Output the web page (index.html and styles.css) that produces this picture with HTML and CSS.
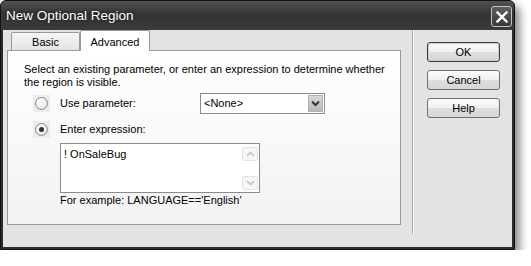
FILE: index.html
```html
<!DOCTYPE html>
<html lang="en">
<head>
    <meta charset="UTF-8">
    <title>New Optional Region</title>
    <link rel="stylesheet" href="styles.css">
</head>
<body>
    <div class="window">
        <div class="titlebar">
            <span class="title">New Optional Region</span>
            <span class="close">
                <svg width="12" height="12" viewBox="0 0 12 12"><path d="M1.5 1.5 L10.5 10.5 M10.5 1.5 L1.5 10.5" stroke="#fff" stroke-width="2.4" stroke-linecap="square"/></svg>
            </span>
        </div>
        <div class="client">
            <div class="main">
                <div class="tabs">
                    <div class="tab">Basic</div>
                    <div class="tab selected">Advanced</div>
                </div>
                <div class="panel">
                    <p class="intro">Select an existing parameter, or enter an expression to determine whether<br>the region is visible.</p>
                    <div class="row row-param">
                        <span class="radio"><span class="circle"></span></span>
                        <span class="label">Use parameter:</span>
                        <div class="select">
                            <span class="select-text">&lt;None&gt;</span>
                            <span class="select-btn">
                                <svg width="9" height="7" viewBox="0 0 9 7"><path d="M1 1.5 L4.5 5 L8 1.5" fill="none" stroke="#333" stroke-width="2"/></svg>
                            </span>
                        </div>
                    </div>
                    <div class="row row-expr">
                        <span class="radio"><span class="circle checked"></span></span>
                        <span class="label">Enter expression:</span>
                    </div>
                    <div class="textarea">
                        <span class="textarea-text">! OnSaleBug</span>
                        <div class="scrollbar">
                            <span class="sb-btn">
                                <svg width="9" height="6" viewBox="0 0 9 6"><path d="M1 5 L4.5 1.5 L8 5" fill="none" stroke="#c4c4c4" stroke-width="1.6"/></svg>
                            </span>
                            <span class="sb-btn">
                                <svg width="9" height="6" viewBox="0 0 9 6"><path d="M1 1 L4.5 4.5 L8 1" fill="none" stroke="#c4c4c4" stroke-width="1.6"/></svg>
                            </span>
                        </div>
                    </div>
                    <p class="example">For example: LANGUAGE=='English'</p>
                </div>
            </div>
            <div class="separator"></div>
            <div class="buttons">
                <button class="btn default">OK</button>
                <button class="btn">Cancel</button>
                <button class="btn">Help</button>
            </div>
        </div>
    </div>
</body>
</html>
```

FILE: styles.css
```css
body {
    margin: 0;
    background: #fff;
    font-family: "Liberation Sans", Arial, sans-serif;
    font-size: 11px;
    color: #000;
}
.window {
    box-sizing: border-box;
    width: 515px;
    height: 250px;
    background: #2c2c2c;
    border: 1px solid #111;
    border-radius: 6px 6px 0 0;
    padding: 0 2px 2px 2px;
    display: flex;
    flex-direction: column;
    box-shadow: 5px 6px 8px rgba(0, 0, 0, 0.45);
}
.titlebar {
    height: 29px;
    display: flex;
    align-items: center;
    justify-content: space-between;
    padding-left: 5px;
    padding-right: 2px;
    background: linear-gradient(#525252, #343434 45%, #3a3a3a);
    margin: 0 -2px;
    border-radius: 5px 5px 0 0;
}
.title {
    color: #fff;
    font-size: 13.5px;
    text-shadow: 0 0 3px rgba(0, 0, 0, 0.8);
}
.close {
    box-sizing: border-box;
    width: 21px;
    height: 21px;
    margin-top: 2px;
    border: 1px solid #c4c4c4;
    border-radius: 3px;
    background: linear-gradient(#5e5e5e, #3a3a3a);
    display: flex;
    align-items: center;
    justify-content: center;
}
.client {
    flex: 1;
    background: #e3e3e3;
    display: flex;
    padding-left: 4px;
}
.main {
    width: 394px;
}
.tabs {
    height: 20px;
    display: flex;
    align-items: flex-end;
    padding-left: 4px;
}
.tab {
    box-sizing: border-box;
    height: 18px;
    width: 69px;
    border: 1px solid #9a9a9a;
    border-bottom: none;
    border-radius: 2px 2px 0 0;
    background: linear-gradient(#f6f6f6, #e4e4e4);
    text-align: center;
    line-height: 18px;
}
.tab.selected {
    height: 21px;
    width: 70px;
    margin-bottom: -1px;
    background: #fff;
    position: relative;
    line-height: 22px;
}
.panel {
    box-sizing: border-box;
    height: 175px;
    border: 1px solid #9a9a9a;
    background: linear-gradient(#fff, #f2f2f2);
    padding: 12px 0 0 16px;
}
.intro {
    margin: 0;
    line-height: 13px;
    white-space: nowrap;
}
.row {
    display: flex;
    align-items: center;
    height: 22px;
}
.row-param {
    margin-top: 3px;
}
.row-expr {
    margin-top: 4px;
}
.radio {
    width: 17px;
    height: 17px;
    margin-left: 9px;
    background: #ececec;
    display: flex;
    align-items: center;
    justify-content: center;
}
.circle {
    box-sizing: border-box;
    width: 13px;
    height: 13px;
    border-radius: 50%;
    border: 1px solid #8a8a8a;
    background: radial-gradient(circle at 40% 35%, #fff, #dcdcdc);
    display: flex;
    align-items: center;
    justify-content: center;
}
.circle.checked::after {
    content: "";
    width: 5px;
    height: 5px;
    border-radius: 50%;
    background: #333;
}
.label {
    margin-left: 10px;
    width: 140px;
}
.select {
    box-sizing: border-box;
    width: 125px;
    height: 21px;
    border: 1px solid #8c8c8c;
    background: #fff;
    display: flex;
    align-items: center;
    justify-content: space-between;
    padding: 0 1px 0 3px;
}
.select-btn {
    box-sizing: border-box;
    width: 15px;
    height: 17px;
    border: 1px solid #b0b0b0;
    background: linear-gradient(#d8d8d8, #b8b8b8);
    display: flex;
    align-items: center;
    justify-content: center;
}
.textarea {
    box-sizing: border-box;
    width: 200px;
    height: 50px;
    margin: 3px 0 0 36px;
    border: 1px solid #8c8c8c;
    background: #fff;
    display: flex;
    justify-content: space-between;
}
.textarea-text {
    padding: 4px 0 0 3px;
}
.scrollbar {
    width: 16px;
    padding: 3px 1px 2px 0;
    display: flex;
    flex-direction: column;
    justify-content: space-between;
}
.sb-btn {
    box-sizing: border-box;
    height: 14px;
    border: 1px solid #e2e2e2;
    border-radius: 2px;
    background: #f7f7f7;
    display: flex;
    align-items: center;
    justify-content: center;
}
.example {
    margin: 1px 0 0 36px;
}
.separator {
    width: 1px;
    height: 204px;
    margin-left: 11px;
    background: #a6a6a6;
    border-right: 1px solid #fff;
}
.buttons {
    margin-left: 13px;
    padding-top: 12px;
    display: flex;
    flex-direction: column;
    gap: 8px;
}
.btn {
    box-sizing: border-box;
    width: 73px;
    height: 20px;
    border: 1px solid #707070;
    border-radius: 3px;
    background: linear-gradient(#fbfbfb, #f0f0f0 50%, #dedede 51%, #d6d6d6);
    font-family: "Liberation Sans", Arial, sans-serif;
    font-size: 11px;
    padding: 0;
    color: #000;
}
.btn.default {
    border-color: #3c3c3c;
    box-shadow: inset 0 0 0 1px #cfcfcf;
}
```
